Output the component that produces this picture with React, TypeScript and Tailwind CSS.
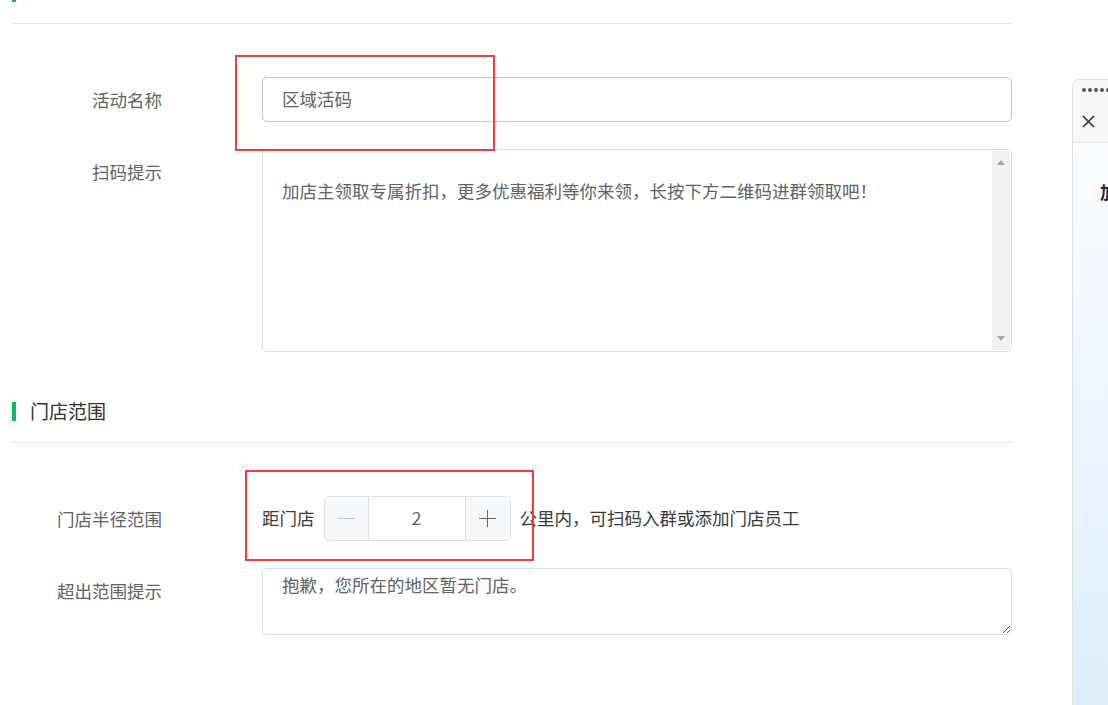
import React from "react";

const font = { fontFamily: '"Noto Sans CJK SC", "Noto Sans", sans-serif' };

function SectionTitle({ title, lift }: { title: string; lift?: boolean }) {
  return (
    <div>
      <div className="flex h-[38px] items-center">
        <div className="h-[19px] w-[4px] bg-[#07c160]" />
        <div
          className={
            lift
              ? "ml-[14px] mt-[-6px] text-[19px] text-[#303133]"
              : "ml-[14px] text-[19px] text-[#303133]"
          }
        >
          {title}
        </div>
      </div>
      <div className="mt-[12px] h-px bg-[#e4e7ed]" />
    </div>
  );
}

function Label({ text }: { text: string }) {
  return (
    <div className="h-[45px] w-[250px] shrink-0 pr-[100px] text-right text-[17.5px] leading-[45px] text-[#606266]">
      {text}
    </div>
  );
}

export default function App() {
  return (
    <div
      className="relative flex h-[705px] w-full items-start overflow-hidden bg-white"
      style={font}
    >
      <div className="ml-[12px] mt-[-27px] w-[1000px] shrink-0">
        <SectionTitle title="基础信息" lift />

        <div className="mt-[53px] flex">
          <Label text="活动名称" />
          <div className="flex h-[45px] flex-1 items-center rounded-[5px] border border-[#c0c4cc] pl-[19px] text-[17.5px] text-[#606266]">
            区域活码
          </div>
        </div>

        <div className="mt-[27px] flex">
          <Label text="扫码提示" />
          <div className="flex h-[203px] flex-1 rounded-[5px] border border-[#dcdfe6]">
            <div className="flex-1 pl-[19px] pt-[28px] text-[17.5px] leading-[26px] text-[#606266]">
              加店主领取专属折扣，更多优惠福利等你来领，长按下方二维码进群领取吧！
            </div>
            <div className="my-px mr-px flex w-[18px] flex-col items-center justify-between rounded-r-[4px] bg-[#f0f0f0] py-[9px]">
              <div className="h-0 w-0 border-x-[4px] border-b-[5px] border-x-transparent border-b-[#a3a3a3]" />
              <div className="h-0 w-0 border-x-[4px] border-t-[5px] border-x-transparent border-t-[#a3a3a3]" />
            </div>
          </div>
        </div>

        <div className="mt-[40px]">
          <SectionTitle title="门店范围" />
        </div>

        <div className="mt-[53px] flex">
          <Label text="门店半径范围" />
          <div className="flex h-[45px] items-center text-[17.5px] text-[#3a3a3a]">
            <span>距门店</span>
            <div className="ml-[9px] flex h-[45px] w-[187px] overflow-hidden rounded-[5px] border border-[#dcdfe6]">
              <div className="flex w-[44px] items-center justify-center border-r border-[#dcdfe6] bg-[#f5f7fa]">
                <div className="h-[1.5px] w-[17px] bg-[#c0c4cc]" />
              </div>
              <div className="flex flex-1 items-center justify-center text-[17.5px] text-[#606266]">
                2
              </div>
              <div className="relative flex w-[45px] items-center justify-center border-l border-[#dcdfe6] bg-[#f5f7fa]">
                <div className="h-[1.5px] w-[17px] bg-[#606266]" />
                <div className="absolute h-[17px] w-[1.5px] bg-[#606266]" />
              </div>
            </div>
            <span className="ml-[9px]">公里内，可扫码入群或添加门店员工</span>
          </div>
        </div>

        <div className="mt-[27px] flex">
          <Label text="超出范围提示" />
          <textarea
            readOnly
            defaultValue="抱歉，您所在的地区暂无门店。"
            className="h-[67px] flex-1 rounded-[5px] border border-[#dcdfe6] pl-[19px] pt-[3px] text-[17.5px] leading-[26px] text-[#606266] outline-none"
            style={font}
          />
        </div>
      </div>

      <div className="ml-[60px] mt-[79px] flex h-[626px] w-[80px] shrink-0 flex-col overflow-hidden rounded-tl-[8px] border-l border-t border-[#e0e0e0]">
        <div className="bg-[#f7f7f7] pl-[9px]">
          <div className="flex h-[20px] items-center gap-[2px]">
            <span className="h-[4px] w-[4px] rounded-full bg-[#555]" />
            <span className="h-[4px] w-[4px] rounded-full bg-[#555]" />
            <span className="h-[4px] w-[4px] rounded-full bg-[#555]" />
            <span className="h-[4px] w-[4px] rounded-full bg-[#555]" />
            <span className="h-[4px] w-[4px] rounded-full bg-[#555]" />
            <span className="h-[4px] w-[4px] rounded-full bg-[#555]" />
          </div>
          <div className="flex h-[42px] items-center">
            <svg width="13" height="13" viewBox="0 0 13 13">
              <path d="M1 1 L12 12 M12 1 L1 12" stroke="#333" strokeWidth="1.6" />
            </svg>
          </div>
        </div>
        <div className="flex-1 border-t border-[#e5e5e5] bg-gradient-to-b from-[#fafcff] to-[#dfecfc] pl-[27px] pt-[36px]">
          <div className="whitespace-nowrap text-[17px] font-bold text-[#222]">加店主领取专属折扣</div>
        </div>
      </div>

      <div className="absolute left-[235px] top-[55px] h-[96px] w-[260px] border-2 border-[#f03c3c]" />
      <div className="absolute left-[245px] top-[470px] h-[91px] w-[289px] border-2 border-[#f03c3c]" />
    </div>
  );
}
